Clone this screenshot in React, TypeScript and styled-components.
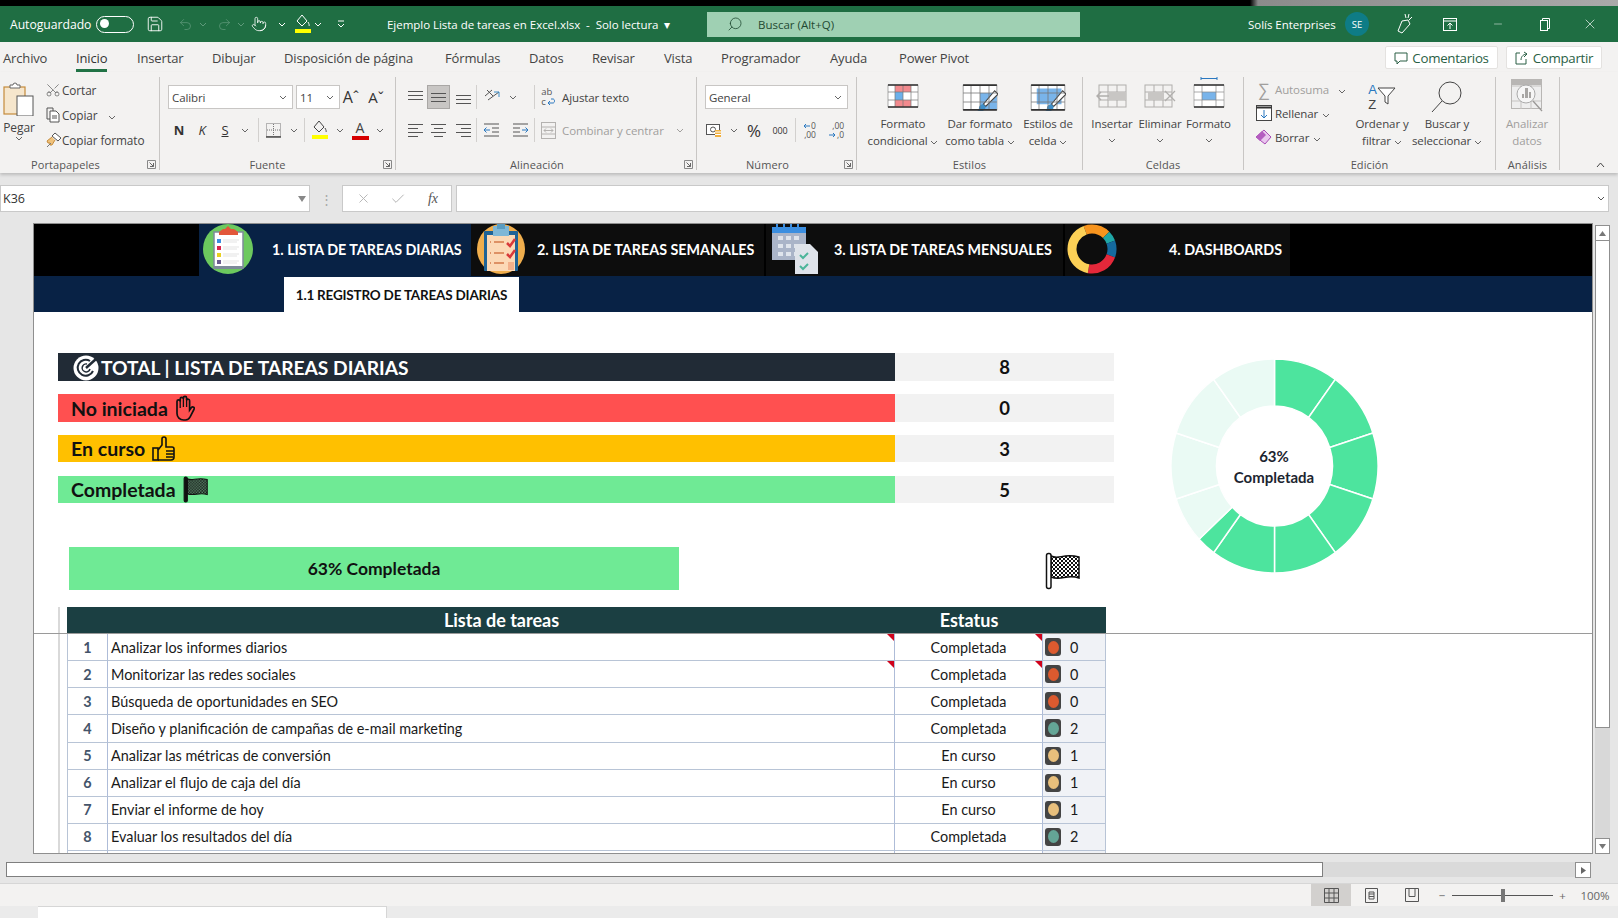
import React, { FC, ReactNode } from "react";
import styled, { createGlobalStyle } from "styled-components";
import { Save, Undo2, Redo2, Scissors, Pointer, Search, X, Check, Minus } from "lucide-react";

const GlobalStyle = createGlobalStyle`
  html, body {
    margin: 0;
    padding: 0;
    background: #f3f2f1;
    overflow: hidden;
  }
  * { box-sizing: border-box; }
`;

const UI = `"Open Sans", "Noto Sans", sans-serif`;
const CELL = `Lato, "Liberation Sans", sans-serif`;

const Page = styled.div`
  width: 1618px;
  height: 918px;
  overflow: hidden;
  display: flex;
  flex-direction: column;
  font-family: ${UI};
  color: #333;
`;

const TopStrip = styled.div`
  height: 6px;
  flex: none;
  background: linear-gradient(to right, #000 1250px, #8b8b8b 1258px, #aaa 100%);
`;

const TitleBar = styled.div`
  height: 36px;
  flex: none;
  background: #1f6e43;
  color: #fff;
  display: flex;
  align-items: center;
  font-size: 12px;
  overflow: hidden;
`;

const Slot = styled.div<{ $w: number; $active?: boolean; $h?: number }>`
  width: ${(p) => p.$w}px;
  height: ${(p) => (p.$h ? `${p.$h}px` : "auto")};
  flex: none;
  display: flex;
  align-items: center;
  justify-content: center;
  background: ${(p) => (p.$active ? "#c8c6c4" : "transparent")};
  border: ${(p) => (p.$active ? "1px solid #a9a7a5" : "none")};
`;

const TitleText = styled.div<{ $w: number; $ml?: number; $size?: number }>`
  width: ${(p) => p.$w}px;
  margin-left: ${(p) => p.$ml ?? 0}px;
  flex: none;
  white-space: pre;
  font-size: ${(p) => p.$size ?? 11.5}px;
  letter-spacing: -0.03px;
`;

const Toggle = styled.div`
  width: 38px;
  height: 17px;
  border: 1.5px solid #fff;
  border-radius: 9px;
  padding: 2.5px 3px;
  flex: none;
`;

const ToggleKnob = styled.div`
  width: 9px;
  height: 9px;
  border-radius: 50%;
  background: #fff;
`;

const SearchBox = styled.div`
  width: 373px;
  height: 25px;
  background: #9fd0b3;
  display: flex;
  align-items: center;
  padding-left: 20px;
  gap: 15px;
  color: #1f4a32;
  font-size: 11.5px;
  flex: none;
`;

const Avatar = styled.div`
  width: 24px;
  height: 24px;
  border-radius: 50%;
  background: #0e7c86;
  color: #fff;
  font-size: 9.5px;
  display: flex;
  align-items: center;
  justify-content: center;
  flex: none;
`;

const TabRow = styled.div`
  height: 30px;
  flex: none;
  background: #f3f2f1;
  display: flex;
  padding-left: 3px;
  font-size: 13px;
  letter-spacing: -0.15px;
  color: #444;
`;

const Tab = styled.div<{ $w: number }>`
  width: ${(p) => p.$w}px;
  flex: none;
  padding-top: 7px;
  white-space: nowrap;
`;

const ActiveTabText = styled.span`
  display: inline-block;
  height: 23px;
  color: #333;
  border-bottom: 3px solid #217346;
`;

const TabActions = styled.div`
  margin-left: auto;
  display: flex;
  gap: 8px;
  padding: 4px 16px 0 0;
`;

const ActionButton = styled.div<{ $w: number }>`
  width: ${(p) => p.$w}px;
  height: 23px;
  background: #fff;
  border: 1px solid #e4e2e0;
  border-radius: 2px;
  display: flex;
  align-items: center;
  justify-content: center;
  gap: 4px;
  color: #2a5f45;
  font-size: 13.3px;
  letter-spacing: -0.3px;
`;

const Ribbon = styled.div`
  height: 101px;
  flex: none;
  background: #f3f2f1;
  display: flex;
  padding: 5px 0 3px;
  box-shadow: 0 2px 3px rgba(0, 0, 0, 0.18);
  position: relative;
  font-size: 11.5px;
  letter-spacing: -0.1px;
  color: #444;
`;

const Group = styled.div<{ $w: number }>`
  width: ${(p) => p.$w}px;
  flex: none;
  border-right: 1px solid #c8c6c4;
  display: flex;
  flex-direction: column;
`;

const GroupBody = styled.div<{ $pl?: number }>`
  height: 81px;
  padding-left: ${(p) => p.$pl ?? 0}px;
  display: flex;
`;

const GroupLabelRow = styled.div<{ $pr?: number }>`
  height: 12px;
  display: flex;
  align-items: center;
  justify-content: center;
  color: #555;
  font-size: 11px;
  letter-spacing: 0.1px;
  padding-right: ${(p) => p.$pr ?? 0}px;
  position: relative;
`;

const Launcher = styled.svg`
  position: absolute;
  right: 3px;
  top: 2px;
  width: 9px;
  height: 9px;
`;

const PasteColumn = styled.div`
  width: 44px;
  flex: none;
  display: flex;
  flex-direction: column;
  align-items: center;
  padding: 5px 6px 0 0;
  font-size: 12px;
  line-height: 16px;
`;

const PasteLabel = styled.div`
  margin-top: 4px;
`;

const ClipColumn = styled.div`
  display: flex;
  flex-direction: column;
`;

const ClipRow = styled.div`
  height: 25px;
  display: flex;
  align-items: center;
  white-space: nowrap;
  font-size: 11.8px;
`;

const StackedRows = styled.div`
  display: flex;
  flex-direction: column;
  gap: 9px;
  padding-top: 8px;
`;

const ToolRow = styled.div`
  height: 24px;
  display: flex;
  align-items: center;
  white-space: nowrap;
`;

const SelectBox = styled.div<{ $w: number; $mr?: number }>`
  width: ${(p) => p.$w}px;
  height: 24px;
  margin-right: ${(p) => p.$mr ?? 0}px;
  background: #fff;
  border: 1px solid #c8c6c4;
  display: flex;
  align-items: center;
  justify-content: space-between;
  padding: 0 5px 0 3px;
  font-size: 11.5px;
  flex: none;
`;

const FontGlyph = styled.span<{ $i?: boolean; $b?: boolean; $u?: boolean; $size?: number }>`
  font-size: ${(p) => p.$size ?? 13}px;
  font-weight: ${(p) => (p.$b ? 700 : 400)};
  font-style: ${(p) => (p.$i ? "italic" : "normal")};
  text-decoration: ${(p) => (p.$u ? "underline" : "none")};
  color: #333;
`;

const ColorLetter = styled.span`
  display: block;
  width: 17px;
  height: 20px;
  font-size: 14px;
  line-height: 15px;
  text-align: center;
  border-bottom: 4px solid #d60000;
  color: #444;
`;

const MiniStack = styled.div<{ $size: number }>`
  display: flex;
  flex-direction: column;
  font-size: ${(p) => p.$size}px;
  line-height: ${(p) => p.$size + 0.5}px;
  color: #555;
`;

const MiniRow = styled.div`
  display: flex;
  align-items: center;
  justify-content: flex-end;
  gap: 1px;
`;

const SortStack = styled.div`
  display: flex;
  flex-direction: column;
  font-family: "Liberation Sans", sans-serif;
  font-size: 13px;
  line-height: 15px;
  color: #444;
`;

const SortA = styled.span`
  color: #2a78c0;
`;

const VLine = styled.div`
  width: 1px;
  height: 24px;
  background: #d2d0ce;
  flex: none;
`;

const MutedText = styled.span<{ $ml?: number }>`
  color: #a19f9d;
  margin-left: ${(p) => p.$ml ?? 0}px;
`;

const TextWithGap = styled.span<{ $ml?: number }>`
  margin-left: ${(p) => p.$ml ?? 0}px;
`;

const BigColumn = styled.div<{ $w: number; $muted?: boolean; $pt?: number }>`
  width: ${(p) => p.$w}px;
  flex: none;
  display: flex;
  flex-direction: column;
  align-items: center;
  padding-top: ${(p) => p.$pt ?? 7}px;
  line-height: 17px;
  white-space: nowrap;
  color: ${(p) => (p.$muted ? "#a19f9d" : "#444")};
`;

const BigIcon = styled.div<{ $h: number; $mb?: number }>`
  height: ${(p) => p.$h}px;
  margin-bottom: ${(p) => p.$mb ?? 7}px;
  display: flex;
  align-items: flex-start;
`;

const ChevronLine = styled.div`
  height: 17px;
  display: flex;
  align-items: center;
`;

const EditRows = styled.div`
  width: 96px;
  flex: none;
  display: flex;
  flex-direction: column;
`;

const EditRow = styled.div`
  height: 24px;
  display: flex;
  align-items: center;
  white-space: nowrap;
`;

const CollapseWrap = styled.div`
  flex: 1;
  display: flex;
  justify-content: flex-end;
  align-items: flex-end;
  padding: 0 13px 2px 0;
`;

const FormulaBar = styled.div`
  height: 50px;
  flex: none;
  background: #e6e6e6;
  display: flex;
  padding-top: 12px;
`;

const FormulaField = styled.div<{ $w: number; $ml?: number }>`
  width: ${(p) => p.$w}px;
  flex: none;
  height: 27px;
  margin-left: ${(p) => p.$ml ?? 0}px;
  background: #fff;
  border: 1px solid #c9c9c9;
  display: flex;
  align-items: center;
  justify-content: space-between;
  padding: 0 3px 0 2px;
  font-size: 12.5px;
  color: #333;
`;

const FxGlyph = styled.span`
  font-family: "Liberation Serif", serif;
  font-style: italic;
  font-size: 14px;
  color: #555;
`;

const DotSep = styled.div`
  width: 32px;
  height: 27px;
  display: flex;
  align-items: center;
  justify-content: center;
  color: #a6a6a6;
  font-size: 13px;
`;

const SheetRow = styled.div`
  height: 631px;
  flex: none;
  background: #e6e6e6;
  display: flex;
  padding-left: 33px;
`;

const Sheet = styled.div`
  width: 1560px;
  height: 631px;
  background: #fff;
  border: 1px solid #8f8f8f;
  display: flex;
  flex-direction: column;
  overflow: hidden;
  flex: none;
  font-family: ${CELL};
`;

const FrozenPane = styled.div`
  height: 410px;
  flex: none;
  border-bottom: 1px solid #9a9a9a;
`;

const NavRow = styled.div`
  height: 52px;
  background: #000;
  display: flex;
  padding-left: 165px;
`;

const NavTab = styled.div<{ $w: number; $active?: boolean; $mr?: number; $iconW: number }>`
  width: ${(p) => p.$w}px;
  margin-right: ${(p) => p.$mr ?? 0}px;
  padding-bottom: 2px;
  background: ${(p) => (p.$active ? "#082245" : "#0d0d0d")};
  display: grid;
  grid-template-columns: ${(p) => p.$iconW}px 1fr;
  align-items: center;
  color: #fff;
  font-weight: 700;
  font-size: 14.3px;
  white-space: nowrap;
  flex: none;
`;

const SubNav = styled.div`
  height: 36px;
  background: #082245;
  padding-left: 250px;
  display: flex;
  align-items: flex-end;
`;

const SubTab = styled.div`
  width: 235px;
  height: 35px;
  background: #fff;
  display: flex;
  align-items: center;
  justify-content: center;
  color: #111;
  font-size: 13.5px;
  font-weight: 700;
  letter-spacing: -0.2px;
`;

const Dash = styled.div`
  display: flex;
  padding-top: 41px;
`;

const DashLeft = styled.div`
  width: 1080px;
  flex: none;
  padding-left: 24px;
`;

const KpiRows = styled.div`
  display: flex;
  flex-direction: column;
`;

const KpiRow = styled.div<{ $h: number; $mb?: number }>`
  height: ${(p) => p.$h}px;
  margin-bottom: ${(p) => p.$mb ?? 0}px;
  display: grid;
  grid-template-columns: 837px 219px;
`;

const KpiLabel = styled.div<{ $bg: string; $color?: string; $pl?: number; $size?: number }>`
  background: ${(p) => p.$bg};
  color: ${(p) => p.$color ?? "#111"};
  display: flex;
  align-items: center;
  gap: 7px;
  padding-left: ${(p) => p.$pl ?? 13}px;
  font-size: ${(p) => p.$size ?? 19.5}px;
  font-weight: 700;
  white-space: nowrap;
`;

const KpiValue = styled.div`
  background: #f2f2f2;
  display: flex;
  align-items: center;
  justify-content: center;
  font-size: 18.5px;
  font-weight: 700;
  color: #111;
`;

const ProgressRow = styled.div`
  display: flex;
  height: 43px;
  margin: 44px 0 17px 11px;
`;

const ProgressBar = styled.div`
  width: 610px;
  height: 43px;
  background: #6fea95;
  display: flex;
  align-items: center;
  justify-content: center;
  font-size: 17.5px;
  font-weight: 700;
  color: #111;
`;

const FlagWrap = styled.div`
  margin: 5px 0 0 366px;
  line-height: 0;
`;

const DonutWrap = styled.div`
  margin: 6px 0 0 57px;
  width: 207px;
  height: 214px;
  display: grid;
  flex: none;
`;

const DonutSvg = styled.svg`
  grid-area: 1 / 1;
  width: 207px;
  height: 214px;
`;

const DonutCenter = styled.div`
  grid-area: 1 / 1;
  display: flex;
  flex-direction: column;
  align-items: center;
  justify-content: center;
  font-size: 15px;
  font-weight: 700;
  line-height: 21px;
  color: #1c2530;
  padding: 2px 1px 0 0;
`;

const TableWrap = styled.div`
  margin-left: 24px;
  border-left: 2px solid #d9d9d9;
  padding-left: 7px;
  width: 1048px;
`;

const HeaderGrid = styled.div`
  display: grid;
  grid-template-columns: 41px 787px 148px 63px;
  height: 26px;
  background: #1b3f42;
  color: #fff;
  font-size: 18px;
  font-weight: 700;
  align-items: center;
  text-align: center;
`;

const HeaderSpan = styled.div<{ $col: string }>`
  grid-column: ${(p) => p.$col};
`;

const ScrollPane = styled.div`
  flex: 1;
  overflow: hidden;
`;

const RowGrid = styled.div`
  display: grid;
  grid-template-columns: 41px 787px 148px 63px;
  height: 27.125px;
  font-size: 14.4px;
  color: #1a1a1a;
`;

const Cell = styled.div<{ $center?: boolean; $bg?: string; $note?: boolean; $end?: boolean }>`
  position: relative;
  display: flex;
  align-items: center;
  justify-content: ${(p) => (p.$center ? "center" : "flex-start")};
  padding-left: ${(p) => (p.$center ? 0 : 3)}px;
  border-bottom: 1px solid #b8c4d6;
  border-right: 1px solid ${(p) => (p.$end ? "#b8c4d6" : "#aebcd8")};
  background: ${(p) => p.$bg ?? "#fff"};
  white-space: nowrap;
  &::after {
    content: "";
    display: ${(p) => (p.$note ? "block" : "none")};
    position: absolute;
    top: 0;
    right: 0;
    border-top: 7px solid #d0021b;
    border-left: 7px solid transparent;
  }
`;

const NumberCell = styled(Cell)`
  font-weight: 700;
  color: #44546a;
  border-left: 1px solid #b8c4d6;
`;

const IconCell = styled(Cell)`
  padding-left: 2px;
  gap: 8px;
`;

const Light = styled.div`
  width: 16px;
  height: 18px;
  border-radius: 3px;
  background: #444;
  display: flex;
  align-items: center;
  justify-content: center;
`;

const LightDot = styled.div<{ $color: string }>`
  width: 11px;
  height: 13px;
  border-radius: 50%;
  background: ${(p) => p.$color};
`;

const VScroll = styled.div`
  width: 15px;
  height: 629px;
  margin: 2px 0 0 2px;
  background: #d8d8d8;
  display: flex;
  flex-direction: column;
  flex: none;
`;

const ScrollButton = styled.div<{ $size?: number }>`
  width: ${(p) => p.$size ?? 15}px;
  height: 16px;
  background: #fff;
  border: 1px solid #8f8f8f;
  display: flex;
  align-items: center;
  justify-content: center;
  flex: none;
`;

const VThumb = styled.div`
  height: 487px;
  background: #fff;
  border: 1px solid #8f8f8f;
  border-top: none;
  flex: none;
`;

const VTrack = styled.div`
  flex: 1;
`;

const HScrollRow = styled.div`
  height: 29px;
  flex: none;
  background: #e6e6e6;
  padding: 8px 27px 6px 6px;
  display: flex;
`;

const HThumb = styled.div`
  width: 1317px;
  height: 15px;
  background: #fff;
  border: 1px solid #7f7f7f;
  flex: none;
`;

const HTrack = styled.div`
  flex: 1;
  background: #dadada;
`;

const StatusBar = styled.div`
  height: 23px;
  flex: none;
  background: #f3f2f1;
  border-top: 1px solid #d6d6d6;
  display: flex;
  justify-content: flex-end;
  align-items: stretch;
  font-size: 11.5px;
  color: #666;
`;

const StatusView = styled(Slot)`
  background: ${(p) => (p.$active ? "#d2d0ce" : "transparent")};
  border: none;
`;

const SliderTrack = styled.div`
  width: 101px;
  display: flex;
  align-items: center;
  flex: none;
`;

const SliderLine = styled.div`
  flex: 1;
  height: 1px;
  background: #555;
`;

const SliderThumb = styled.div`
  width: 4px;
  height: 13px;
  background: #777;
`;

const SheetTabs = styled.div`
  flex: 1;
  background: #ebebeb;
  padding-left: 38px;
  display: flex;
`;

const SheetTabBox = styled.div`
  width: 349px;
  background: #fff;
  border-top: 1px solid #d6d6d6;
  border-right: 1px solid #d6d6d6;
`;

/* ---------- icons ---------- */

const Chevron: FC<{ color?: string }> = ({ color = "#666" }) => (
  <svg width="8" height="5" viewBox="0 0 8 5">
    <path d="M1 1l3 3 3-3" fill="none" stroke={color} strokeWidth="1" />
  </svg>
);

const Corner = () => (
  <Launcher viewBox="0 0 9 9">
    <path d="M.5.5h8v8h-8z" fill="none" stroke="#888" />
    <path d="M2.5 2.5l4 4M3 6.5h3.5V3" fill="none" stroke="#666" />
  </Launcher>
);

const HLines: FC<{ rows: [number, number, number][] }> = ({ rows }) => (
  <svg width="17" height="16" viewBox="0 0 17 16">
    {rows.map(([a, b, y], i) => (
      <line key={i} x1={a} x2={b} y1={y + 0.5} y2={y + 0.5} stroke="#555" />
    ))}
  </svg>
);

const Grid: FC<{ w: number; h: number; children?: ReactNode }> = ({ w, h, children }) => (
  <svg width={w} height={h} viewBox="0 0 32 24">
    <rect x="1" y="1" width="30" height="22" fill="#fff" stroke="#777" strokeWidth=".6" />
    {children}
    {[8, 16, 24].map((x) => (
      <line key={x} x1={x} x2={x} y1="1" y2="23" stroke="#777" strokeWidth=".7" />
    ))}
    {[8, 16].map((y) => (
      <line key={y} x1="1" x2="31" y1={y} y2={y} stroke="#777" strokeWidth=".7" />
    ))}
    <path d="M1 1h30M1 23h30" stroke="#333" strokeWidth="1.6" fill="none" />
  </svg>
);

const Brush = () => (
  <g>
    <path d="M29 6L19 18l2 2L32 9z" fill="#fff" stroke="#444" strokeWidth="1" />
    <path d="M19 18c-3 0-4 2-4 4s-2 2-3 2c3 1 9 1 9-4z" fill="#3f8fc9" />
  </g>
);

const PasteIcon = () => (
  <svg width="32" height="34" viewBox="0 0 32 34">
    <rect x="1" y="5" width="21" height="27" fill="#f6e6cc" stroke="#c58b3b" strokeWidth="1.2" />
    <path d="M7 6V3h3a2 2 0 0 1 4 0h3v3z" fill="#fff" stroke="#666" />
    <rect x="14" y="14" width="16" height="20" fill="#fff" stroke="#555" />
  </svg>
);

const CopyIcon = () => (
  <svg width="14" height="16" viewBox="0 0 14 16">
    <path d="M1 1h6v3M1 1v11h3" fill="none" stroke="#555" />
    <path d="M4 4h6l3 3v8H4z" fill="#fff" stroke="#555" />
    <path d="M6 9h5M6 11h5" stroke="#555" />
  </svg>
);

const BrushSmall = () => (
  <svg width="17" height="16" viewBox="0 0 17 16">
    <path d="M10 1l6 5-3 3-6-5z" fill="#fff" stroke="#555" />
    <path d="M7 5L2 9l1 2 2 0 0 2 2 0 3-5" fill="#f0c27b" stroke="#c58b3b" />
    <path d="M2 15l4-4" stroke="#777" />
  </svg>
);

const FillIcon: FC<{ bar: string; stroke?: string }> = ({ bar, stroke = "#444" }) => (
  <svg width="16" height="20" viewBox="0 0 16 20">
    <path d="M7 1l5 6-5 5-5-5zM13 8c1 2 1.500 3 1 4" fill="none" stroke={stroke} />
    <rect x="0" y="15" width="16" height="4" fill={bar} />
  </svg>
);

const BorderIcon = () => (
  <svg width="18" height="17" viewBox="0 0 18 17">
    <rect x="1.500" y="1.500" width="14" height="13" fill="none" stroke="#777" strokeDasharray="1 1" />
    <path d="M8.500 2v12M2 8h13" stroke="#777" strokeDasharray="1 1" />
    <path d="M1 15h15" stroke="#333" strokeWidth="1.300" />
  </svg>
);

const OrientIcon = () => (
  <svg width="18" height="18" viewBox="0 0 18 18">
    <path d="M2 8l7-6M4 2l6 6M5 12l11-8" stroke="#555" fill="none" />
    <path d="M16 4v5M16 4h-5" stroke="#3f8fc9" fill="none" />
  </svg>
);

const IndentIcon: FC<{ flip?: boolean }> = ({ flip }) => (
  <svg width="17" height="16" viewBox="0 0 17 16">
    <g transform={flip ? "translate(17 0) scale(-1 1)" : undefined}>
      <path d="M1 2h15M9 6h7M9 10h7M1 14h15" stroke="#555" />
      <path d="M7 8H1M3.500 5.500L1 8l2.500 2.500" stroke="#2a78c0" fill="none" />
    </g>
  </svg>
);

const WrapIcon = () => (
  <MiniStack $size={9.5}>
    <span>ab</span>
    <MiniRow>
      c
      <svg width="9" height="8" viewBox="0 0 9 8">
        <path d="M1 5h5c2 0 2-4 0-4H4M1 5l2-2M1 5l2 2" fill="none" stroke="#2a78c0" />
      </svg>
    </MiniRow>
  </MiniStack>
);

const MergeIcon = () => (
  <svg width="15" height="17" viewBox="0 0 15 17">
    <rect x=".5" y=".5" width="14" height="16" fill="none" stroke="#b4b2b0" />
    <path d="M.5 5h14M.5 12h14M3 8.500h9M3 8.500l2-2M3 8.500l2 2M12 8.500l-2-2M12 8.500l-2 2" fill="none" stroke="#b4b2b0" />
  </svg>
);

const CurrencyIcon = () => (
  <svg width="18" height="16" viewBox="0 0 18 16">
    <rect x=".5" y="2.500" width="13" height="10" fill="#fff" stroke="#555" />
    <circle cx="7" cy="7.500" r="2.500" fill="none" stroke="#555" />
    <rect x="9" y="8" width="6" height="7" fill="#f0b040" />
    <path d="M9 10h6M9 12.500h6" stroke="#fff" />
  </svg>
);

const ArrowLeft = () => (
  <svg width="7" height="6" viewBox="0 0 7 6">
    <path d="M7 3H1M3 1L1 3l2 2" fill="none" stroke="#2a78c0" />
  </svg>
);

const ArrowRight = () => (
  <svg width="7" height="6" viewBox="0 0 7 6">
    <path d="M0 3h6M4 1l2 2-2 2" fill="none" stroke="#2a78c0" />
  </svg>
);

const DecimalUp = () => (
  <MiniStack $size={8.5}>
    <MiniRow>
      <ArrowLeft />0
    </MiniRow>
    <MiniRow>,00</MiniRow>
  </MiniStack>
);

const DecimalDown = () => (
  <MiniStack $size={8.5}>
    <MiniRow>,00</MiniRow>
    <MiniRow>
      <ArrowRight />,0
    </MiniRow>
  </MiniStack>
);

const CondIcon = () => (
  <Grid w={32} h={24}>
    <rect x="8" y="1" width="16" height="7" fill="#f28a8e" />
    <rect x="8" y="16" width="16" height="7" fill="#f28a8e" />
    <rect x="8" y="8" width="8" height="8" fill="#6cb0ea" />
  </Grid>
);

const TableStyleIcon = () => (
  <Grid w={36} h={27}>
    <rect x="16" y="8" width="15" height="15" fill="#79b4ea" />
    <Brush />
  </Grid>
);

const CellStyleIcon = () => (
  <Grid w={36} h={27}>
    <rect x="6" y="4" width="22" height="14" fill="#79b4ea" />
    <Brush />
  </Grid>
);

const InsertIcon = () => (
  <svg width="32" height="24" viewBox="0 0 32 24">
    <g stroke="#b0aeac" fill="none">
      <rect x="3" y="1" width="27" height="22" />
      <path d="M12 1v22M21 1v22M3 8h27M3 16h27" />
    </g>
    <rect x="12" y="8" width="18" height="8" fill="#c8c6c4" />
    <path d="M1 12h12M5 8l-4 4 4 4" fill="none" stroke="#b0aeac" strokeWidth="1.400" />
  </svg>
);

const DeleteIcon = () => (
  <svg width="32" height="24" viewBox="0 0 32 24">
    <g stroke="#b0aeac" fill="none">
      <rect x="1" y="1" width="27" height="22" />
      <path d="M10 1v22M19 1v22M1 8h27M1 16h27" />
    </g>
    <rect x="4" y="8" width="16" height="8" fill="#c8c6c4" />
    <path d="M21 7l10 10M31 7L21 17" stroke="#b0aeac" strokeWidth="1.300" />
  </svg>
);

const FormatIcon = () => (
  <svg width="32" height="32" viewBox="0 0 32 32">
    <path d="M8 1.500h16M8 0v3M24 0v3" stroke="#2a78c0" fill="none" />
    <rect x="1" y="8" width="30" height="22" fill="#fff" stroke="#888" strokeWidth=".6" />
    <rect x="9" y="15" width="14" height="8" fill="#79b4ea" />
    <path d="M9 8v22M23 8v22M1 15h30M1 23h30" stroke="#888" strokeWidth=".7" />
    <path d="M1 8h30M1 30h30" stroke="#333" strokeWidth="1.600" />
  </svg>
);

const SortIcon = () => (
  <>
    <SortStack>
      <SortA>A</SortA>
      <span>Z</span>
    </SortStack>
    <svg width="19" height="24" viewBox="0 0 19 24">
      <path d="M1 6h17l-7 8v8l-3-2v-6z" fill="#fff" stroke="#444" />
    </svg>
  </>
);

const FindIcon = () => (
  <svg width="32" height="32" viewBox="0 0 32 32">
    <circle cx="19" cy="12" r="11" fill="none" stroke="#444" />
    <path d="M11 20L1 31" stroke="#444" />
  </svg>
);

const FillDownIcon = () => (
  <svg width="16" height="16" viewBox="0 0 16 16">
    <rect x=".5" y=".5" width="15" height="15" fill="#fff" stroke="#444" />
    <path d="M.5 2.500h15" stroke="#333" strokeWidth="2" />
    <path d="M8 5v8M5 10l3 3 3-3" fill="none" stroke="#2a78c0" />
  </svg>
);

const EraserIcon = () => (
  <svg width="18" height="16" viewBox="0 0 18 16">
    <path d="M10 1l7 7-6 7-9-7z" fill="#e9c7ee" stroke="#a84bb5" transform="translate(-1 0)" />
    <path d="M1 8l6-6 4 4-6 6z" fill="#b45cc0" />
  </svg>
);

const AnalyzeIcon = () => (
  <svg width="32" height="33" viewBox="0 0 32 33">
    <rect x=".5" y=".5" width="30" height="29" fill="#eee" stroke="#b8b6b4" />
    <path d="M1 7h29M1 22h29M10 1v29M20 1v29" stroke="#c6c4c2" />
    <rect x="1" y="1" width="29" height="5" fill="#b8b6b4" />
    <circle cx="15" cy="15" r="9" fill="#f6f6f6" stroke="#aaa" />
    <path d="M11 19v-4h2v4zM14 19V9h3v10zM18 19v-6h2v6z" fill="#a8a6a4" />
    <path d="M22 22l9 10" stroke="#9a9896" strokeWidth="1.300" />
  </svg>
);

const ClipIconGreen = () => (
  <svg width="50" height="50" viewBox="0 0 50 50">
    <circle cx="25" cy="25" r="25" fill="#6cc95e" />
    <rect x="11" y="8" width="29" height="36" fill="#fff" stroke="#7d8a99" strokeWidth="1.500" />
    <rect x="11" y="42" width="29" height="3" fill="#7d8a99" />
    <path d="M16 8l4-3h2l3-3 3 3h3l4 3v3H16z" fill="#e2573a" />
    {(
      [
        ["#3b8ee0", 15],
        ["#d8254d", 22],
        ["#e8d020", 29],
        ["#6a5b8d", 36],
      ] as [string, number][]
    ).map(([c, y]) => (
      <g key={c}>
        <rect x="14" y={y} width="4" height="4" fill={c} />
        <path d={`M20 ${y + 1}h16M20 ${y + 3}h14`} stroke="#e3e3e3" />
      </g>
    ))}
  </svg>
);

const ClipIconOrange = () => (
  <svg width="48" height="50" viewBox="0 0 48 50">
    <ellipse cx="24" cy="25" rx="24" ry="25" fill="#f0ae4d" />
    <rect x="7" y="7" width="34" height="40" rx="1" fill="#1f6396" />
    <rect x="10" y="11" width="28" height="36" fill="#fcd9b6" />
    <rect x="16" y="2" width="16" height="10" fill="#7fb7d6" />
    <rect x="20" y="0" width="8" height="5" fill="#5a9cc0" />
    {[18, 29, 39].map((y) => (
      <path key={y} d={`M13 ${y}h1M17 ${y}h10`} stroke="#d47a4a" strokeWidth="1.500" />
    ))}
    <path d="M30 19l3 3 5-7M30 30l3 3 5-7" stroke="#d8393a" strokeWidth="2.500" fill="none" />
    <path d="M31 38h6v8h-6z" fill="#f3b08a" />
  </svg>
);

const CalendarIcon = () => (
  <svg width="48" height="50" viewBox="0 0 48 50">
    <rect x="1" y="3" width="34" height="33" fill="#aab4c8" />
    <rect x="1" y="3" width="34" height="6" fill="#3b8ee0" />
    {[5, 12, 19, 26].map((x) => (
      <rect key={x} x={x} y="0" width="2" height="5" fill="#3b8ee0" />
    ))}
    {[12, 20, 28].map((y) =>
      [7, 15, 23].map((x) => <rect key={`${x}-${y}`} x={x} y={y} width="5" height="4" fill="#dfe4ec" />)
    )}
    <path d="M24 20h15l8 8v22H24z" fill="#dfe3ea" />
    <path d="M29 31l3 3 5-5M29 42l3 3 5-5" stroke="#4cb59a" strokeWidth="2" fill="none" />
  </svg>
);

const Ring: FC = () => {
  const seg = (a: number, b: number, c: string) => {
    const p = (t: number) => [25 + 20 * Math.sin((t * Math.PI) / 180), 25 - 20 * Math.cos((t * Math.PI) / 180)];
    const [x1, y1] = p(a);
    const [x2, y2] = p(b);
    return <path key={a} d={`M${x1} ${y1}A20 20 0 ${b - a > 180 ? 1 : 0} 1 ${x2} ${y2}`} stroke={c} strokeWidth="9" fill="none" />;
  };
  return (
    <svg width="50" height="50" viewBox="0 0 50 50">
      {seg(340, 360, "#f7941e")}
      {seg(0, 45, "#f7941e")}
      {seg(45, 70, "#1fa6a6")}
      {seg(70, 110, "#156a9e")}
      {seg(110, 190, "#e4283a")}
      {seg(190, 340, "#fcd056")}
    </svg>
  );
};

const TargetIcon = () => (
  <svg width="27" height="27" viewBox="0 0 27 27">
    <circle cx="13" cy="14" r="12.500" fill="#fff" />
    <path d="M17 7a8 8 0 1 0 3 10" fill="none" stroke="#212b36" strokeWidth="2" />
    <path d="M14 10a4 4 0 1 0 3 5" fill="none" stroke="#212b36" strokeWidth="1.500" />
    <path d="M13 14L23 5" stroke="#212b36" strokeWidth="2.500" />
  </svg>
);

const HandIcon = () => (
  <svg width="20" height="26" viewBox="0 0 20 26">
    <path
      d="M2 14V6.500a1.600 1.600 0 0 1 3.200 0V4a1.600 1.600 0 0 1 3.200 0V3a1.600 1.600 0 0 1 3.200 0v2a1.600 1.600 0 0 1 3 .8V15l1.800-2.500a1.600 1.600 0 0 1 2.500 2L15 22a5 5 0 0 1-4.500 3h-2A6.500 6.500 0 0 1 2 18.500z"
      fill="none"
      stroke="#111"
      strokeWidth="1.700"
    />
    <path d="M5.200 6v7M8.400 4v8M11.600 4v8" stroke="#111" strokeWidth="1.300" />
  </svg>
);

const ThumbIcon = () => (
  <svg width="24" height="26" viewBox="0 0 24 26">
    <rect x="1" y="12" width="5" height="12" fill="none" stroke="#111" strokeWidth="1.600" />
    <path
      d="M6 14l4-5V3a2 2 0 0 1 4 0v8h6a2 2 0 0 1 2 2v8a3 3 0 0 1-3 3H6"
      fill="none"
      stroke="#111"
      strokeWidth="1.600"
    />
    <path d="M14 15h8M14 18h8M14 21h7" stroke="#111" strokeWidth="1.300" />
  </svg>
);

const FlagIcon: FC<{ w: number; h: number; id: string; fg?: string; bg?: string; post?: string }> = ({
  w,
  h,
  id,
  fg = "#111",
  bg = "#fff",
  post = "#fff",
}) => (
  <svg width={w} height={h} viewBox="0 0 35 38">
    <defs>
      <pattern id={id} width="4" height="4" patternUnits="userSpaceOnUse">
        <rect width="4" height="4" fill={bg} />
        <rect width="2" height="2" fill={fg} />
        <rect x="2" y="2" width="2" height="2" fill={fg} />
      </pattern>
    </defs>
    <path d="M6 4c8 4 12-3 28 1v21c-12-4-18 3-28-1z" fill={`url(#${id})`} stroke="#111" strokeWidth="1.500" />
    <rect x="1.500" y="1.500" width="4.500" height="35" rx="2" fill={post} stroke="#111" strokeWidth="1.500" />
  </svg>
);

const Donut: FC = () => {
  const cx = 103.5;
  const cy = 107;
  const arc = (a: number, b: number, fill: string) => {
    const pt = (t: number, rx: number, ry: number) => {
      const r = (t * Math.PI) / 180;
      return `${cx + rx * Math.sin(r)} ${cy - ry * Math.cos(r)}`;
    };
    return (
      <path
        key={a}
        fill={fill}
        stroke="#fff"
        strokeWidth="1.500"
        d={`M${pt(a, 103.5, 107)}A103.5 107 0 0 1 ${pt(b, 103.5, 107)}L${pt(b, 58, 60)}A58 60 0 0 0 ${pt(a, 58, 60)}Z`}
      />
    );
  };
  const dark = [0, 36, 72, 108, 144, 180, 216, 226.8];
  const light = [226.8, 252, 288, 324, 360];
  return (
    <DonutSvg viewBox="0 0 207 214">
      {dark.slice(0, -1).map((a, i) => arc(a, dark[i + 1], "#4de49e"))}
      {light.slice(0, -1).map((a, i) => arc(a, light[i + 1], "#eafaf4"))}
    </DonutSvg>
  );
};

/* ---------- data ---------- */

const tabs: [string, number][] = [
  ["Archivo", 73],
  ["Inicio", 61],
  ["Insertar", 75],
  ["Dibujar", 72],
  ["Disposición de página", 161],
  ["Fórmulas", 84],
  ["Datos", 63],
  ["Revisar", 72],
  ["Vista", 57],
  ["Programador", 109],
  ["Ayuda", 69],
  ["Power Pivot", 80],
];

const tasks = [
  { n: 1, name: "Analizar los informes diarios", status: "Completada", color: "#dc5a2f", v: 0, note: true },
  { n: 2, name: "Monitorizar las redes sociales", status: "Completada", color: "#dc5a2f", v: 0, note: true },
  { n: 3, name: "Búsqueda de oportunidades en SEO", status: "Completada", color: "#dc5a2f", v: 0 },
  { n: 4, name: "Diseño y planificación de campañas de e-mail marketing", status: "Completada", color: "#64a596", v: 2 },
  { n: 5, name: "Analizar las métricas de conversión", status: "En curso", color: "#e8bf7c", v: 1 },
  { n: 6, name: "Analizar el flujo de caja del día", status: "En curso", color: "#e8bf7c", v: 1 },
  { n: 7, name: "Enviar el informe de hoy", status: "En curso", color: "#e8bf7c", v: 1 },
  { n: 8, name: "Evaluar los resultados del día", status: "Completada", color: "#64a596", v: 2 },
];

const iconCellBg = "#f0f2f6";

export default function App() {
  return (
    <Page>
      <GlobalStyle />
      <TopStrip />
      <TitleBar>
        <Slot $w={10} />
        <TitleText $w={86} $size={12.2}>
          Autoguardado
        </TitleText>
        <Toggle>
          <ToggleKnob />
        </Toggle>
        <Slot $w={42}>
          <Save size={18} strokeWidth={1.2} color="#fff" />
        </Slot>
        <Slot $w={18}>
          <Undo2 size={15} strokeWidth={1.2} color="#5f9a7b" />
        </Slot>
        <Slot $w={18}>
          <Chevron color="#5f9a7b" />
        </Slot>
        <Slot $w={24}>
          <Redo2 size={15} strokeWidth={1.2} color="#5f9a7b" />
        </Slot>
        <Slot $w={10}>
          <Chevron color="#5f9a7b" />
        </Slot>
        <Slot $w={26}>
          <Pointer size={16} strokeWidth={1.2} color="#fff" />
        </Slot>
        <Slot $w={20}>
          <Chevron color="#fff" />
        </Slot>
        <Slot $w={22}>
          <FillIcon bar="#ffff00" stroke="#fff" />
        </Slot>
        <Slot $w={8}>
          <Chevron color="#fff" />
        </Slot>
        <Slot $w={38}>
          <svg width="8" height="8" viewBox="0 0 8 8">
            <path d="M1 1h6M1 4l3 3 3-3" fill="none" stroke="#fff" />
          </svg>
        </Slot>
        <TitleText $w={320} $ml={27}>
          {"Ejemplo Lista de tareas en Excel.xlsx  -  Solo lectura  ▾"}
        </TitleText>
        <SearchBox>
          <Search size={16} strokeWidth={1.2} color="#1f4a32" style={{ transform: "scaleX(-1)" }} />
          Buscar (Alt+Q)
        </SearchBox>
        <TitleText $w={97} $ml={168}>
          Solís Enterprises
        </TitleText>
        <Avatar>SE</Avatar>
        <Slot $w={72}>
          <svg width="18" height="22" viewBox="0 0 18 22">
            <path d="M6 8l6-1 2 4-8 9-4-2zM9 1l1 4M13 1l-1 4M16 4l-3 3" fill="none" stroke="#fff" />
          </svg>
        </Slot>
        <Slot $w={18}>
          <svg width="14" height="13" viewBox="0 0 14 13">
            <rect x=".5" y=".5" width="13" height="12" fill="none" stroke="#fff" />
            <path d="M1 3h12M7 11V5M4.500 7.500L7 5l2.500 2.500" fill="none" stroke="#fff" />
          </svg>
        </Slot>
        <Slot $w={78}>
          <Minus size={12} strokeWidth={1} color="#fff" />
        </Slot>
        <Slot $w={16}>
          <svg width="10" height="13" viewBox="0 0 10 13">
            <rect x=".5" y="2.500" width="7" height="10" fill="none" stroke="#fff" />
            <path d="M2.500 2.500V.5h7v10h-2" fill="none" stroke="#fff" />
          </svg>
        </Slot>
        <Slot $w={74}>
          <X size={16} strokeWidth={1} color="#fff" />
        </Slot>
      </TitleBar>

      <TabRow>
        {tabs.map(([label, w]) => (
          <Tab key={label} $w={w}>
            {label === "Inicio" ? <ActiveTabText>{label}</ActiveTabText> : label}
          </Tab>
        ))}
        <TabActions>
          <ActionButton $w={113}>
            <svg width="14" height="14" viewBox="0 0 14 14">
              <path d="M1 2h12v8H6l-3 3v-3H1z" fill="none" stroke="#2a5f45" />
            </svg>
            Comentarios
          </ActionButton>
          <ActionButton $w={96}>
            <svg width="14" height="14" viewBox="0 0 14 14">
              <path d="M5 2H1v11h10V8M6 9c0-4 3-6 6-6M9 1l3 2-3 3" fill="none" stroke="#2a5f45" />
            </svg>
            Compartir
          </ActionButton>
        </TabActions>
      </TabRow>

      <Ribbon>
        <Group $w={160}>
          <GroupBody>
            <PasteColumn>
              <PasteIcon />
              <PasteLabel>Pegar</PasteLabel>
              <Chevron />
            </PasteColumn>
            <ClipColumn>
              <ClipRow>
                <Slot $w={18}>
                  <Scissors size={16} strokeWidth={1} color="#555" style={{ transform: "rotate(-90deg)" }} />
                </Slot>
                Cortar
              </ClipRow>
              <ClipRow>
                <Slot $w={18}>
                  <CopyIcon />
                </Slot>
                Copiar
                <TextWithGap $ml={10}>
                  <Chevron />
                </TextWithGap>
              </ClipRow>
              <ClipRow>
                <Slot $w={18}>
                  <BrushSmall />
                </Slot>
                Copiar formato
              </ClipRow>
            </ClipColumn>
          </GroupBody>
          <GroupLabelRow $pr={28}>
            Portapapeles
            <Corner />
          </GroupLabelRow>
        </Group>

        <Group $w={236}>
          <GroupBody $pl={8}>
            <StackedRows>
              <ToolRow>
                <SelectBox $w={125} $mr={3}>
                  Calibri
                  <Chevron />
                </SelectBox>
                <SelectBox $w={44}>
                  11
                  <Chevron />
                </SelectBox>
                <Slot $w={22}>
                  <FontGlyph $size={16}>Aˆ</FontGlyph>
                </Slot>
                <Slot $w={28}>
                  <FontGlyph $size={15}>Aˇ</FontGlyph>
                </Slot>
              </ToolRow>
              <ToolRow>
                <Slot $w={22}>
                  <FontGlyph $b>N</FontGlyph>
                </Slot>
                <Slot $w={24}>
                  <FontGlyph $i>K</FontGlyph>
                </Slot>
                <Slot $w={22}>
                  <FontGlyph $u>S</FontGlyph>
                </Slot>
                <Slot $w={18}>
                  <Chevron />
                </Slot>
                <Slot $w={4} />
                <VLine />
                <Slot $w={29}>
                  <BorderIcon />
                </Slot>
                <Slot $w={12}>
                  <Chevron />
                </Slot>
                <Slot $w={4} />
                <VLine />
                <Slot $w={29}>
                  <FillIcon bar="#ffff00" />
                </Slot>
                <Slot $w={12}>
                  <Chevron />
                </Slot>
                <Slot $w={28}>
                  <ColorLetter>A</ColorLetter>
                </Slot>
                <Slot $w={12}>
                  <Chevron />
                </Slot>
              </ToolRow>
            </StackedRows>
          </GroupBody>
          <GroupLabelRow $pr={20}>
            Fuente
            <Corner />
          </GroupLabelRow>
        </Group>

        <Group $w={301}>
          <GroupBody $pl={8}>
            <StackedRows>
              <ToolRow>
                <Slot $w={23}>
                  <HLines rows={[[1, 16, 2], [1, 16, 6], [1, 16, 10]]} />
                </Slot>
                <Slot $w={23} $h={24} $active>
                  <HLines rows={[[1, 16, 4], [1, 16, 8], [1, 16, 12]]} />
                </Slot>
                <Slot $w={26}>
                  <HLines rows={[[1, 16, 6], [1, 16, 10], [1, 16, 14]]} />
                </Slot>
                <VLine />
                <Slot $w={29}>
                  <OrientIcon />
                </Slot>
                <Slot $w={14}>
                  <Chevron />
                </Slot>
                <Slot $w={14} />
                <VLine />
                <Slot $w={27}>
                  <WrapIcon />
                </Slot>
                Ajustar texto
              </ToolRow>
              <ToolRow>
                <Slot $w={23}>
                  <HLines rows={[[1, 16, 2], [1, 11, 6], [1, 16, 10], [1, 11, 14]]} />
                </Slot>
                <Slot $w={23}>
                  <HLines rows={[[1, 16, 2], [4, 13, 6], [1, 16, 10], [4, 13, 14]]} />
                </Slot>
                <Slot $w={26}>
                  <HLines rows={[[1, 16, 2], [6, 16, 6], [1, 16, 10], [6, 16, 14]]} />
                </Slot>
                <VLine />
                <Slot $w={29}>
                  <IndentIcon />
                </Slot>
                <Slot $w={28}>
                  <IndentIcon flip />
                </Slot>
                <VLine />
                <Slot $w={27}>
                  <MergeIcon />
                </Slot>
                <MutedText>Combinar y centrar</MutedText>
                <Slot $w={33}>
                  <Chevron color="#a19f9d" />
                </Slot>
              </ToolRow>
            </StackedRows>
          </GroupBody>
          <GroupLabelRow $pr={18}>
            Alineación
            <Corner />
          </GroupLabelRow>
        </Group>

        <Group $w={160}>
          <GroupBody $pl={8}>
            <StackedRows>
              <ToolRow>
                <SelectBox $w={143}>
                  General
                  <Chevron />
                </SelectBox>
              </ToolRow>
              <ToolRow>
                <Slot $w={20}>
                  <CurrencyIcon />
                </Slot>
                <Slot $w={18}>
                  <Chevron />
                </Slot>
                <Slot $w={22}>
                  <FontGlyph $size={17}>%</FontGlyph>
                </Slot>
                <Slot $w={30}>
                  <FontGlyph $size={9}>000</FontGlyph>
                </Slot>
                <VLine />
                <Slot $w={27}>
                  <DecimalUp />
                </Slot>
                <Slot $w={27}>
                  <DecimalDown />
                </Slot>
              </ToolRow>
            </StackedRows>
          </GroupBody>
          <GroupLabelRow $pr={18}>
            Número
            <Corner />
          </GroupLabelRow>
        </Group>

        <Group $w={226}>
          <GroupBody $pl={4}>
            <BigColumn $w={84}>
              <BigIcon $h={24}>
                <CondIcon />
              </BigIcon>
              Formato
              <span>
                condicional <Chevron />
              </span>
            </BigColumn>
            <BigColumn $w={70}>
              <BigIcon $h={24}>
                <TableStyleIcon />
              </BigIcon>
              Dar formato
              <span>
                como tabla <Chevron />
              </span>
            </BigColumn>
            <BigColumn $w={66}>
              <BigIcon $h={24}>
                <CellStyleIcon />
              </BigIcon>
              Estilos de
              <span>
                celda <Chevron />
              </span>
            </BigColumn>
          </GroupBody>
          <GroupLabelRow>Estilos</GroupLabelRow>
        </Group>

        <Group $w={161}>
          <GroupBody $pl={5}>
            <BigColumn $w={48}>
              <BigIcon $h={24}>
                <InsertIcon />
              </BigIcon>
              Insertar
              <ChevronLine>
                <Chevron />
              </ChevronLine>
            </BigColumn>
            <BigColumn $w={48}>
              <BigIcon $h={24}>
                <DeleteIcon />
              </BigIcon>
              Eliminar
              <ChevronLine>
                <Chevron />
              </ChevronLine>
            </BigColumn>
            <BigColumn $w={49} $pt={0}>
              <BigIcon $h={31}>
                <FormatIcon />
              </BigIcon>
              Formato
              <ChevronLine>
                <Chevron />
              </ChevronLine>
            </BigColumn>
          </GroupBody>
          <GroupLabelRow>Celdas</GroupLabelRow>
        </Group>

        <Group $w={252}>
          <GroupBody $pl={10}>
            <EditRows>
              <EditRow>
                <Slot $w={20}>
                  <FontGlyph $size={17}>
                    <MutedText>∑</MutedText>
                  </FontGlyph>
                </Slot>
                <MutedText $ml={1}>Autosuma</MutedText>
                <TextWithGap $ml={9}>
                  <Chevron />
                </TextWithGap>
              </EditRow>
              <EditRow>
                <Slot $w={20}>
                  <FillDownIcon />
                </Slot>
                <TextWithGap $ml={1}>Rellenar</TextWithGap>
                <TextWithGap $ml={4}>
                  <Chevron />
                </TextWithGap>
              </EditRow>
              <EditRow>
                <Slot $w={20}>
                  <EraserIcon />
                </Slot>
                <TextWithGap $ml={1}>Borrar</TextWithGap>
                <TextWithGap $ml={4}>
                  <Chevron />
                </TextWithGap>
              </EditRow>
            </EditRows>
            <BigColumn $w={64} $pt={5}>
              <BigIcon $h={28} $mb={5}>
                <SortIcon />
              </BigIcon>
              Ordenar y
              <span>
                filtrar <Chevron />
              </span>
            </BigColumn>
            <BigColumn $w={66} $pt={4}>
              <BigIcon $h={32} $mb={2}>
                <FindIcon />
              </BigIcon>
              Buscar y
              <span>
                seleccionar <Chevron />
              </span>
            </BigColumn>
          </GroupBody>
          <GroupLabelRow>Edición</GroupLabelRow>
        </Group>

        <Group $w={64}>
          <GroupBody>
            <BigColumn $w={62} $muted $pt={2}>
              <BigIcon $h={33} $mb={3}>
                <AnalyzeIcon />
              </BigIcon>
              Analizar
              <span>datos</span>
            </BigColumn>
          </GroupBody>
          <GroupLabelRow>Análisis</GroupLabelRow>
        </Group>

        <CollapseWrap>
          <svg width="9" height="6" viewBox="0 0 9 6">
            <path d="M1 5l3.500-4L8 5" fill="none" stroke="#444" />
          </svg>
        </CollapseWrap>
      </Ribbon>

      <FormulaBar>
        <FormulaField $w={310}>
          K36
          <svg width="8" height="6" viewBox="0 0 8 6">
            <path d="M0 0h8L4 6z" fill="#888" />
          </svg>
        </FormulaField>
        <DotSep>⋮</DotSep>
        <FormulaField $w={110}>
          <Slot $w={36}>
            <X size={15} strokeWidth={1.5} color="#b4b4b4" />
          </Slot>
          <Slot $w={34}>
            <Check size={16} strokeWidth={1.5} color="#b4b4b4" />
          </Slot>
          <Slot $w={36}>
            <FxGlyph>fx</FxGlyph>
          </Slot>
        </FormulaField>
        <FormulaField $w={1153} $ml={4}>
          <span />
          <Chevron color="#555" />
        </FormulaField>
      </FormulaBar>

      <SheetRow>
        <Sheet>
          <FrozenPane>
            <NavRow>
              <NavTab $w={272} $active $iconW={73}>
                <Slot $w={58}>
                  <ClipIconGreen />
                </Slot>
                1. LISTA DE TAREAS DIARIAS
              </NavTab>
              <NavTab $w={293} $mr={2} $iconW={66}>
                <Slot $w={60}>
                  <ClipIconOrange />
                </Slot>
                2. LISTA DE TAREAS SEMANALES
              </NavTab>
              <NavTab $w={297} $mr={2} $iconW={68}>
                <Slot $w={58}>
                  <CalendarIcon />
                </Slot>
                3. LISTA DE TAREAS MENSUALES
              </NavTab>
              <NavTab $w={225} $iconW={104}>
                <Slot $w={54}>
                  <Ring />
                </Slot>
                4. DASHBOARDS
              </NavTab>
            </NavRow>
            <SubNav>
              <SubTab>1.1 REGISTRO DE TAREAS DIARIAS</SubTab>
            </SubNav>
            <Dash>
              <DashLeft>
                <KpiRows>
                  <KpiRow $h={28} $mb={13}>
                    <KpiLabel $bg="#212b36" $color="#fff" $pl={15} $size={19.2}>
                      <TargetIcon />
                      <TextWithGap $ml={-6}>TOTAL | LISTA DE TAREAS DIARIAS</TextWithGap>
                    </KpiLabel>
                    <KpiValue>8</KpiValue>
                  </KpiRow>
                  <KpiRow $h={28} $mb={13}>
                    <KpiLabel $bg="#ff5050">
                      No iniciada
                      <HandIcon />
                    </KpiLabel>
                    <KpiValue>0</KpiValue>
                  </KpiRow>
                  <KpiRow $h={27} $mb={14}>
                    <KpiLabel $bg="#ffc000">
                      En curso
                      <ThumbIcon />
                    </KpiLabel>
                    <KpiValue>3</KpiValue>
                  </KpiRow>
                  <KpiRow $h={27}>
                    <KpiLabel $bg="#6fea95">
                      Completada
                      <FlagIcon w={25} h={27} id="flagDark" bg="#111" fg="#5f8f70" post="#111" />
                    </KpiLabel>
                    <KpiValue>5</KpiValue>
                  </KpiRow>
                </KpiRows>
                <ProgressRow>
                  <ProgressBar>63% Completada</ProgressBar>
                  <FlagWrap>
                    <FlagIcon w={35} h={38} id="flagBig" />
                  </FlagWrap>
                </ProgressRow>
              </DashLeft>
              <DonutWrap>
                <Donut />
                <DonutCenter>
                  <span>63%</span>
                  <span>Completada</span>
                </DonutCenter>
              </DonutWrap>
            </Dash>
            <TableWrap>
              <HeaderGrid>
                <HeaderSpan $col="2 / 3">Lista de tareas</HeaderSpan>
                <HeaderSpan $col="3 / 4">Estatus</HeaderSpan>
              </HeaderGrid>
            </TableWrap>
          </FrozenPane>
          <ScrollPane>
            <TableWrap>
              {tasks.map((t) => (
                <RowGrid key={t.n}>
                  <NumberCell $center>{t.n}</NumberCell>
                  <Cell $note={t.note}>{t.name}</Cell>
                  <Cell $center $note={t.note}>
                    {t.status}
                  </Cell>
                  <IconCell $bg={iconCellBg} $end>
                    <Light>
                      <LightDot $color={t.color} />
                    </Light>
                    <TextWithGap $ml={1}>{t.v}</TextWithGap>
                  </IconCell>
                </RowGrid>
              ))}
              <RowGrid>
                <NumberCell />
                <Cell />
                <Cell />
                <IconCell $bg={iconCellBg} $end />
              </RowGrid>
            </TableWrap>
          </ScrollPane>
        </Sheet>
        <VScroll>
          <ScrollButton>
            <svg width="7" height="5" viewBox="0 0 7 5">
              <path d="M3.500 0L7 5H0z" fill="#777" />
            </svg>
          </ScrollButton>
          <VThumb />
          <VTrack />
          <ScrollButton>
            <svg width="7" height="5" viewBox="0 0 7 5">
              <path d="M0 0h7L3.500 5z" fill="#777" />
            </svg>
          </ScrollButton>
        </VScroll>
      </SheetRow>

      <HScrollRow>
        <HThumb />
        <HTrack />
        <ScrollButton $size={16}>
          <svg width="5" height="7" viewBox="0 0 5 7">
            <path d="M0 0l5 3.500L0 7z" fill="#666" />
          </svg>
        </ScrollButton>
      </HScrollRow>

      <StatusBar>
        <StatusView $w={40} $active>
          <svg width="15" height="15" viewBox="0 0 15 15">
            <path d="M.5.5h14v14H.5zM.5 5h14M.5 10h14M5 .5v14M10 .5v14" fill="none" stroke="#555" />
          </svg>
        </StatusView>
        <Slot $w={41}>
          <svg width="13" height="15" viewBox="0 0 13 15">
            <path d="M.5.5h12v14H.5zM4 4h5v7H4zM4 6h5M4 8.500h5" fill="none" stroke="#555" />
          </svg>
        </Slot>
        <Slot $w={40}>
          <svg width="14" height="14" viewBox="0 0 14 14">
            <path d="M.5.5h13v13H.5zM4 .5v8h6v-8" fill="none" stroke="#555" />
          </svg>
        </Slot>
        <Slot $w={20}>−</Slot>
        <SliderTrack>
          <SliderLine />
          <SliderThumb />
          <SliderLine />
        </SliderTrack>
        <Slot $w={19}>+</Slot>
        <Slot $w={46}>100%</Slot>
      </StatusBar>

      <SheetTabs>
        <SheetTabBox />
      </SheetTabs>
    </Page>
  );
}
